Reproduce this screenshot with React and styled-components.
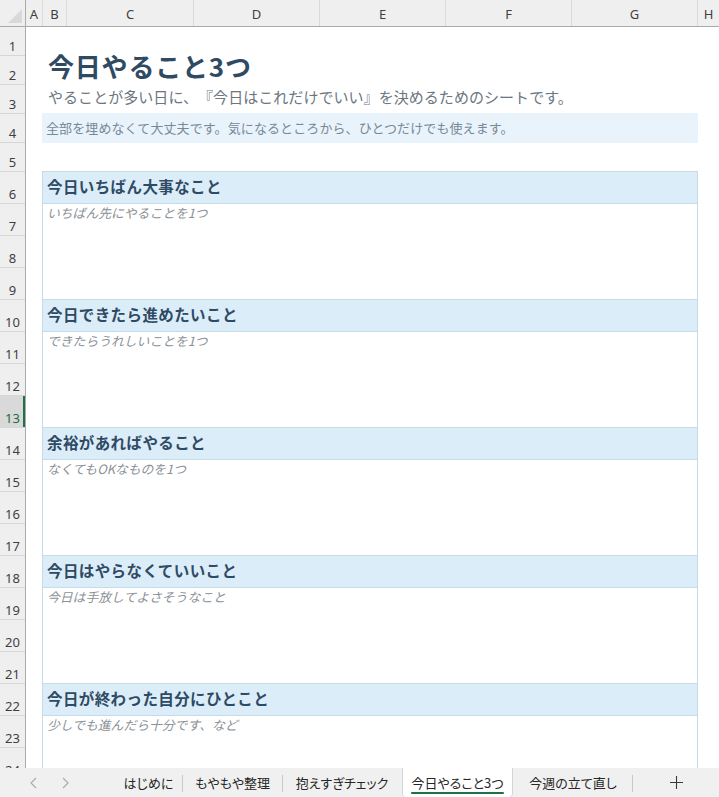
import React from "react";
import styled, { createGlobalStyle, css } from "styled-components";

const GlobalStyle = createGlobalStyle`
  html, body { margin: 0; padding: 0; background: #ffffff; }
  body {
    font-family: "Noto Sans CJK JP", "Noto Sans", sans-serif;
    text-spacing-trim: space-all;
  }
  * { box-sizing: border-box; }
`;

const JP = `"Noto Sans CJK JP", "Noto Sans", sans-serif`;
const UI = `"Noto Sans", "Open Sans", "Noto Sans CJK JP", sans-serif`;

const Frame = styled.div`
  width: 719px;
  height: 797px;
  display: flex;
  flex-direction: column;
  overflow: hidden;
  background: #ffffff;
`;

/* ---------- column header ---------- */
const ColumnBar = styled.div`
  display: flex;
  height: 27px;
  flex: none;
  background: #efefef;
  border-bottom: 1px solid #ababab;
`;

const Corner = styled.div`
  position: relative;
  width: 26px;
  flex: none;
  border-right: 1px solid #ababab;
  &::after {
    content: "";
    position: absolute;
    right: 3px;
    bottom: 3px;
    width: 0;
    height: 0;
    border-left: 14px solid transparent;
    border-bottom: 14px solid #d9d9d9;
  }
`;

const ColHead = styled.div`
  width: ${(p) => p.$w}px;
  flex: none;
  display: flex;
  align-items: center;
  justify-content: center;
  border-right: ${(p) => (p.$last ? "none" : "1px solid #d9d9d9")};
  font-family: ${UI};
  font-size: 13px;
  color: #3f3f3f;
  padding-top: 1px;
`;

/* ---------- body ---------- */
const Body = styled.div`
  flex: 1;
  display: flex;
  min-height: 0;
  overflow: hidden;
`;

const RowHeaders = styled.div`
  width: 26px;
  flex: none;
  display: flex;
  flex-direction: column;
  background: #efefef;
  border-right: 1px solid #ababab;
`;

const RowNum = styled.div`
  height: ${(p) => p.$h}px;
  flex: none;
  display: flex;
  align-items: flex-end;
  justify-content: center;
  padding-bottom: 1px;
  border-bottom: 1px solid #d6d6d6;
  font-family: ${UI};
  font-size: 13px;
  line-height: 16px;
  color: #3f3f3f;
  ${(p) =>
    p.$selected &&
    css`
      background: #d9d9d9;
      color: #1e6b41;
      box-shadow: inset -2px 0 0 #1e7145;
    `}
`;

const Sheet = styled.div`
  flex: 1;
  display: flex;
  flex-direction: column;
  padding-left: 16px;
  overflow: hidden;
`;

const Spacer = styled.div`
  height: ${(p) => p.$h}px;
  flex: none;
`;

const Column = styled.div`
  width: 656px;
  display: flex;
  flex-direction: column;
`;

const TitleRow = styled.div`
  height: 29px;
  flex: none;
  display: flex;
  align-items: flex-end;
  padding-left: 6px;
  padding-bottom: 3px;
  font-family: ${JP};
  font-size: 26px;
  font-weight: 700;
  line-height: 30px;
  letter-spacing: 0.8px;
  color: #2f4a63;
  white-space: nowrap;
`;

const SubRow = styled.div`
  height: 29px;
  flex: none;
  display: flex;
  align-items: center;
  padding-left: 6px;
  padding-bottom: 4px;
  font-family: ${JP};
  font-size: 15px;
  letter-spacing: 0.05px;
  color: #6b7680;
  white-space: nowrap;
`;

const NoteBand = styled.div`
  height: 30px;
  flex: none;
  display: flex;
  align-items: center;
  padding-left: 4px;
  padding-bottom: 1px;
  background: #e8f3fc;
  font-family: ${JP};
  font-size: 13px;
  letter-spacing: 0.1px;
  color: #7a8894;
  white-space: nowrap;
`;

const Block = styled.section`
  flex: none;
  display: flex;
  flex-direction: column;
`;

const BlockHead = styled.div`
  height: 33px;
  display: flex;
  align-items: center;
  padding-left: 4px;
  padding-bottom: 4px;
  background: #dcedfa;
  border: 1px solid #c6dbe8;
  font-family: ${JP};
  font-size: 15.5px;
  font-weight: 700;
  letter-spacing: 0.4px;
  color: #2f4a63;
  white-space: nowrap;
`;

const BlockBody = styled.div`
  height: 95px;
  border-left: 1px solid #c6dbe8;
  border-right: 1px solid #c6dbe8;
  padding: 0 0 0 4px;
`;

const Hint = styled.div`
  font-family: ${JP};
  font-size: 12.8px;
  font-style: italic;
  line-height: 18px;
  color: #8b9197;
  white-space: nowrap;
`;

/* ---------- tab bar ---------- */
const TabBar = styled.div`
  height: 29px;
  flex: none;
  display: flex;
  align-items: stretch;
  background: #f0f0f0;
`;

const Nav = styled.div`
  width: 115px;
  flex: none;
  display: flex;
  align-items: center;
  padding-left: 28px;
  gap: 22px;
`;

const NavButton = styled.span`
  width: 10px;
  display: flex;
  justify-content: center;
  color: #a8a8a8;
`;

const Tab = styled.div`
  position: relative;
  width: ${(p) => p.$w}px;
  flex: none;
  display: flex;
  align-items: center;
  justify-content: center;
  font-family: ${JP};
  font-feature-settings: "palt";
  font-size: 13px;
  color: #262626;
  white-space: nowrap;
  padding-bottom: 1px;
  ${(p) =>
    p.$active &&
    css`
      background: #ffffff;
      border-left: 1px solid #d4d4d4;
      border-right: 1px solid #d4d4d4;
      border-radius: 0 0 4px 4px;
    `}
`;

const Underline = styled.span`
  position: absolute;
  left: 8px;
  right: 8px;
  bottom: 3px;
  height: 2px;
  border-radius: 1px;
  background: #1e7145;
`;

const Sep = styled.span`
  width: 1px;
  flex: none;
  margin: 7px 0 5px;
  background: #c8c8c8;
`;

const Gap = styled.span`
  width: 1px;
  flex: none;
`;

const AddTab = styled.div`
  flex: 1;
  display: flex;
  align-items: center;
  justify-content: center;
  color: #3a3a3a;
`;

const Chevron = ({ dir }) => (
  <svg width="7" height="12" viewBox="0 0 7 12" fill="none">
    <path
      d={dir === "left" ? "M6 1L1 6l5 5" : "M1 1l5 5-5 5"}
      stroke="currentColor"
      strokeWidth="1.1"
    />
  </svg>
);

const Plus = () => (
  <svg width="13" height="13" viewBox="0 0 13 13">
    <path d="M6.5 0v13M0 6.5h13" stroke="currentColor" strokeWidth="1.1" />
  </svg>
);

const columns = [
  { l: "A", w: 17 },
  { l: "B", w: 24 },
  { l: "C", w: 127 },
  { l: "D", w: 126 },
  { l: "E", w: 126 },
  { l: "F", w: 126 },
  { l: "G", w: 126 },
  { l: "H", w: 21, last: true },
];

const rows = Array.from({ length: 24 }, (_, i) => ({
  n: i + 1,
  h: i < 5 ? 29 : 32,
}));

const blocks = [
  { title: "今日いちばん大事なこと", hint: "いちばん先にやることを1つ" },
  { title: "今日できたら進めたいこと", hint: "できたらうれしいことを1つ" },
  { title: "余裕があればやること", hint: "なくてもOKなものを1つ" },
  { title: "今日はやらなくていいこと", hint: "今日は手放してよさそうなこと" },
  { title: "今日が終わった自分にひとこと", hint: "少しでも進んだら十分です、など" },
];

const tabs = [
  { label: "はじめに", w: 67 },
  { label: "もやもや整理", w: 99 },
  { label: "抱えすぎチェック", w: 118 },
  { label: "今日やること3つ", w: 111, active: true },
  { label: "今週の立て直し", w: 118 },
];

export default function App() {
  return (
    <>
      <GlobalStyle />
      <Frame>
        <ColumnBar>
          <Corner />
          {columns.map((c) => (
            <ColHead key={c.l} $w={c.w} $last={c.last}>
              {c.l}
            </ColHead>
          ))}
        </ColumnBar>
        <Body>
          <RowHeaders>
            {rows.map((r) => (
              <RowNum key={r.n} $h={r.h} $selected={r.n === 13}>
                {r.n}
              </RowNum>
            ))}
          </RowHeaders>
          <Sheet>
            <Column>
              <Spacer $h={28} />
              <TitleRow>今日やること3つ</TitleRow>
              <SubRow>やることが多い日に、『今日はこれだけでいい』を決めるためのシートです。</SubRow>
              <NoteBand>全部を埋めなくて大丈夫です。気になるところから、ひとつだけでも使えます。</NoteBand>
              <Spacer $h={28} />
              {blocks.map((b) => (
                <Block key={b.title}>
                  <BlockHead>{b.title}</BlockHead>
                  <BlockBody>
                    <Hint>{b.hint}</Hint>
                  </BlockBody>
                </Block>
              ))}
            </Column>
          </Sheet>
        </Body>
        <TabBar>
          <Nav>
            <NavButton>
              <Chevron dir="left" />
            </NavButton>
            <NavButton>
              <Chevron dir="right" />
            </NavButton>
          </Nav>
          {tabs.map((t, i) => (
            <React.Fragment key={t.label}>
              {i > 0 && (t.active || tabs[i - 1].active ? <Gap /> : <Sep />)}
              <Tab $w={t.w} $active={t.active}>
                {t.label}
                {t.active && <Underline />}
              </Tab>
            </React.Fragment>
          ))}
          <Sep />
          <AddTab>
            <Plus />
          </AddTab>
        </TabBar>
      </Frame>
    </>
  );
}
